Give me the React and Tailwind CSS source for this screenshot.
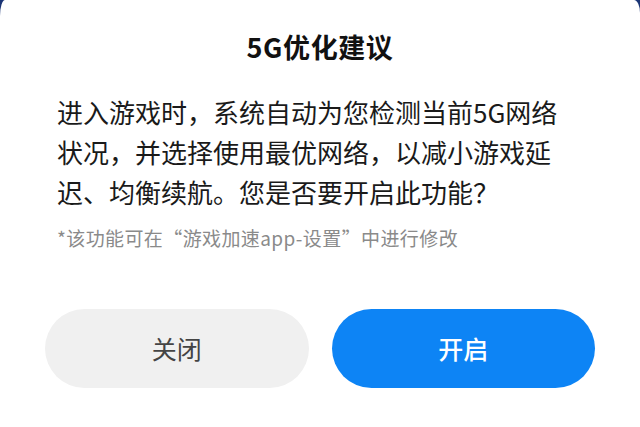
import React from "react";

const lines = [
  "进入游戏时，系统自动为您检测当前5G网络",
  "状况，并选择使用最优网络，以减小游戏延",
  "迟、均衡续航。您是否要开启此功能？",
];

const App = () => {
  return (
    <div className="w-[640px] h-[427px] bg-[#1b3575] overflow-hidden">
      <div
        className="h-full bg-white rounded-tl-[5px_16px] rounded-tr-[6px_13px] flex flex-col"
        style={{ fontFamily: '"Noto Sans CJK SC", "Noto Sans", sans-serif' }}
      >
        <h1 className="pt-[27px] text-center text-[27px] leading-[40px] font-bold tracking-[0.6px] text-[#111111]">
          5G优化建议
        </h1>

        <div className="mt-[25px] px-[57px] text-[26px] leading-[40px] text-[#1a1a1a]">
          {lines.map((line) => (
            <div key={line} className="whitespace-nowrap">
              {line}
            </div>
          ))}
        </div>

        <p className="mt-[14px] px-[57px] text-[19px] leading-[24px] tracking-[0.4px] text-[#8a8a8a] whitespace-nowrap">
          *该功能可在“游戏加速app-设置”中进行修改
        </p>

        <div className="mt-[59px] px-[45px] flex gap-[23px]">
          <button className="flex-1 h-[79px] rounded-full bg-[#f0f0f0] text-[25px] text-[#444444]">
            关闭
          </button>
          <button className="flex-1 h-[79px] rounded-full bg-[#0d84f5] text-[25px] text-white font-medium">
            开启
          </button>
        </div>
      </div>
    </div>
  );
};

export default App;
